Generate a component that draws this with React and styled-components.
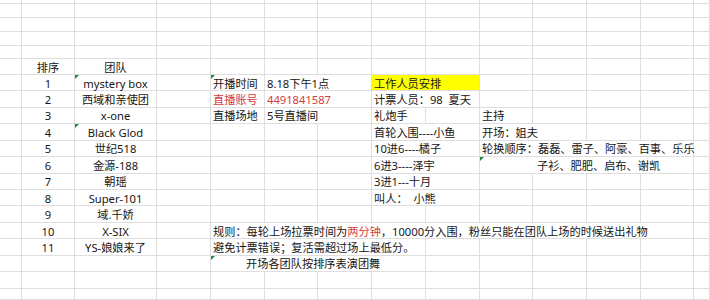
import React from 'react';
import styled, { createGlobalStyle } from 'styled-components';

const GlobalStyle = createGlobalStyle`
  html, body {
    margin: 0;
    padding: 0;
    background: #fff;
    overflow: hidden;
  }
`;

const COL_WIDTHS = [22, 53, 82, 54, 54, 53, 54, 54, 54, 53, 54, 54, 53];
const ROW_HEIGHTS = [4.3, 14, 13.4, 14, 13.6, 15.7, ...Array(13).fill(16.45)];

const Sheet = styled.div`
  width: 710px;
  height: 300px;
  overflow: hidden;
  display: grid;
  grid-template-columns: ${COL_WIDTHS.map((w) => w + 'px').join(' ')} 1fr;
  grid-template-rows: ${ROW_HEIGHTS.map((h) => h + 'px').join(' ')} 1fr;
  font-family: "Noto Sans", "Noto Sans CJK SC", sans-serif;
  font-size: 11.2px;
  color: #161616;
`;

const Cell = styled.div`
  position: relative;
  grid-column: span ${(p) => p.$span || 1};
  box-sizing: border-box;
  border-right: 1px solid #dedede;
  border-bottom: 1px solid #dedede;
  background: ${(p) => p.$fill || 'transparent'};
  display: flex;
  align-items: center;
  justify-content: ${(p) => (p.$center ? 'center' : 'flex-start')};
  padding-left: ${(p) => (p.$center ? 0 : 2 + (p.$indent || 0))}px;
  padding-top: 1px;
  white-space: pre;
  overflow: visible;
  line-height: 1;
  color: ${(p) => (p.$red ? '#d63b3b' : 'inherit')};
`;

const Red = styled.span`
  color: #d63b3b;
`;

const Marker = styled.span`
  position: absolute;
  top: 0;
  left: 0;
  width: 0;
  height: 0;
  border-top: 4px solid #1e8a3c;
  border-right: 4px solid transparent;
`;

const teams = [
  'mystery box',
  '西域和亲使团',
  'x-one',
  'Black Glod',
  '世纪518',
  '金源-188',
  '朝瑶',
  'Super-101',
  '域.千娇',
  'X-SIX',
  'YS-娘娘来了',
];

// cells by data row: [column, props]
const extra = {
  1: [
    { c: 4, text: '开播时间', marker: true },
    { c: 5, span: 2, text: '8.18下午1点' },
    { c: 7, span: 2, text: '工作人员安排', fill: '#ffff00' },
  ],
  2: [
    { c: 4, text: '直播账号', red: true },
    { c: 5, span: 2, text: '4491841587', red: true },
    { c: 7, span: 2, text: '计票人员：98  夏天' },
  ],
  3: [
    { c: 4, text: '直播场地' },
    { c: 5, span: 2, text: '5号直播间' },
    { c: 7, text: '礼炮手' },
    { c: 9, text: '主持' },
  ],
  4: [
    { c: 7, span: 2, text: '首轮入围----小鱼' },
    { c: 9, span: 2, text: '开场：姐夫' },
  ],
  5: [
    { c: 7, span: 2, text: '10进6----橘子' },
    { c: 9, span: 4, text: '轮换顺序：磊磊、雷子、阿豪、百事、乐乐' },
  ],
  6: [
    { c: 7, span: 2, text: '6进3----泽宇' },
    { c: 9, span: 4, text: '子衫、肥肥、启布、谢凯', indent: 55, marker: true },
  ],
  7: [{ c: 7, span: 2, text: '3进1---十月' }],
  8: [{ c: 7, span: 2, text: '叫人：  小熊' }],
  10: [
    {
      c: 4,
      span: 9,
      text: (
        <>
          规则：每轮上场拉票时间为<Red>两分钟</Red>，10000分入围，粉丝只能在团队上场的时候送出礼物
        </>
      ),
    },
  ],
  11: [{ c: 4, span: 4, text: '避免计票错误；复活需超过场上最低分。' }],
  12: [{ c: 4, span: 4, text: '开场各团队按排序表演团舞', indent: 33, marker: true }],
};

function rowCells(r) {
  const cells = [];
  if (r === 5) {
    cells.push({ c: 1, text: '排序', center: true });
    cells.push({ c: 2, text: '团队', center: true });
  }
  const n = r - 5;
  if (n >= 1 && n <= 11) {
    cells.push({ c: 1, text: String(n), center: true });
    cells.push({ c: 2, text: teams[n - 1], center: true, marker: n === 1 || n === 4 });
    (extra[n] || []).forEach((x) => cells.push(x));
  }
  if (n === 12) extra[12].forEach((x) => cells.push(x));
  return cells;
}

function Row({ r }) {
  const cells = rowCells(r);
  const out = [];
  let c = 0;
  while (c < 14) {
    const cell = cells.find((x) => x.c === c);
    if (cell) {
      out.push(
        <Cell
          key={c}
          $span={cell.span}
          $center={cell.center}
          $fill={cell.fill}
          $red={cell.red}
          $indent={cell.indent}
        >
          {cell.marker && <Marker />}
          {cell.text}
        </Cell>
      );
      c += cell.span || 1;
    } else {
      out.push(<Cell key={c} />);
      c += 1;
    }
  }
  return out;
}

export default function App() {
  return (
    <>
      <GlobalStyle />
      <Sheet>
        {Array.from({ length: 20 }, (_, r) => (
          <Row key={r} r={r} />
        ))}
      </Sheet>
    </>
  );
}
